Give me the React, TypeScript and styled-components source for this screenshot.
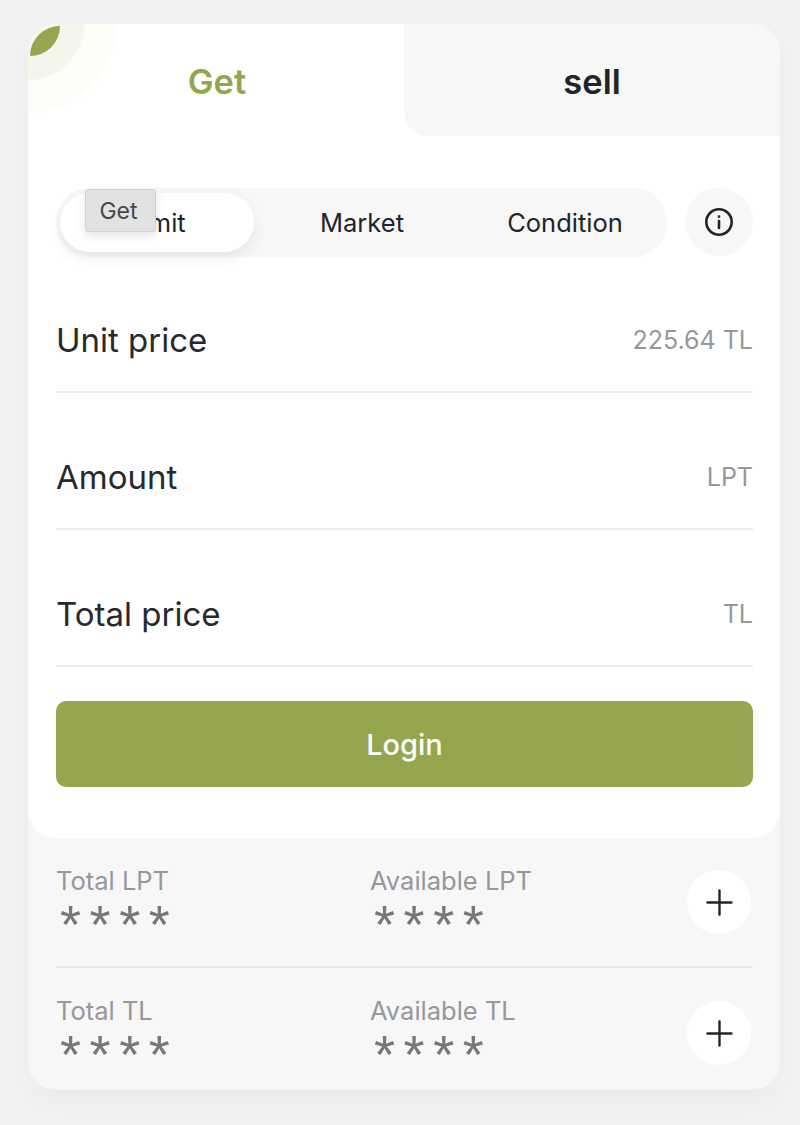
import styled, { createGlobalStyle } from "styled-components";
import { Plus } from "lucide-react";

const GlobalStyle = createGlobalStyle`
    html, body {
        margin: 0;
        padding: 0;
        background: #f2f2f3;
        font-family: "Inter", "Liberation Sans", sans-serif;
    }
`;

const balances = [
    { total: "Total LPT", available: "Available LPT" },
    { total: "Total TL", available: "Available TL" },
];

const fields = [
    { label: "Unit price", unit: "225.64 TL" },
    { label: "Amount", unit: "LPT" },
    { label: "Total price", unit: "TL" },
];

export default function App() {
    return (
        <Page>
            <GlobalStyle />
            <Card>
                <TradePanel>
                    <Glow />
                    <Leaf />
                    <Tabs>
                        <Tab $active>Get</Tab>
                        <Tab>sell</Tab>
                    </Tabs>
                    <Body>
                        <TypeRow>
                            <TypeSwitch>
                                <TypeOption $active>Limit</TypeOption>
                                <TypeOption>Market</TypeOption>
                                <TypeOption>Condition</TypeOption>
                                <Tooltip>Get</Tooltip>
                            </TypeSwitch>
                            <InfoButton>
                                <svg width="30" height="30" viewBox="0 0 30 30" fill="none" stroke="#222428" strokeWidth="2.6">
                                    <circle cx="15" cy="15" r="12.7" />
                                    <line x1="15" y1="14" x2="15" y2="21" strokeLinecap="round" />
                                    <circle cx="15" cy="9.6" r="0.8" fill="#222428" strokeWidth="1.2" />
                                </svg>
                            </InfoButton>
                        </TypeRow>
                        {fields.map((field) => (
                            <Field key={field.label}>
                                <FieldLabel>{field.label}</FieldLabel>
                                <FieldUnit>{field.unit}</FieldUnit>
                            </Field>
                        ))}
                        <LoginButton>Login</LoginButton>
                    </Body>
                </TradePanel>
                <Balances>
                    {balances.map((row) => (
                        <BalanceRow key={row.total}>
                            <BalanceItem>
                                <BalanceLabel>{row.total}</BalanceLabel>
                                <Stars>****</Stars>
                            </BalanceItem>
                            <BalanceItem>
                                <BalanceLabel>{row.available}</BalanceLabel>
                                <Stars>****</Stars>
                            </BalanceItem>
                            <AddButton>
                                <Plus size={41} strokeWidth={2.4} color="#222428" absoluteStrokeWidth />
                            </AddButton>
                        </BalanceRow>
                    ))}
                </Balances>
            </Card>
        </Page>
    );
}

const Page = styled.div`
    width: 800px;
    height: 1125px;
    box-sizing: border-box;
    padding: 24px 20px 0 28px;
    overflow: hidden;
`;

const Card = styled.div`
    width: 752px;
    height: 1066px;
    display: flex;
    flex-direction: column;
    border-radius: 28px;
    background: #f7f7f8;
    box-shadow: 0 12px 30px rgba(0, 0, 0, 0.035);
`;

const TradePanel = styled.div`
    position: relative;
    flex-shrink: 0;
    height: 814px;
    background: #ffffff;
    border-radius: 28px;
    overflow: hidden;
`;

const Glow = styled.div`
    position: absolute;
    top: -90px;
    left: -90px;
    width: 180px;
    height: 180px;
    border-radius: 50%;
    background: radial-gradient(circle, #f4f6ec 0 55px, #fcfdf7 57px 86px, transparent 90px);
`;

const Leaf = styled.div`
    position: absolute;
    top: 2px;
    left: 2px;
    width: 30px;
    height: 30px;
    background: #95a64e;
    border-radius: 100% 0 100% 0;
`;

const Tabs = styled.div`
    position: relative;
    display: flex;
    height: 112px;
`;

const Tab = styled.div<{ $active?: boolean }>`
    flex: 0 0 50%;
    box-sizing: border-box;
    display: flex;
    align-items: center;
    justify-content: center;
    padding-top: 2px;
    padding-left: ${(p) => (p.$active ? "2px" : "0")};
    font-size: 34.5px;
    font-weight: 600;
    color: ${(p) => (p.$active ? "#93a64f" : "#222428")};
    background: ${(p) => (p.$active ? "transparent" : "#f7f7f8")};
    border-bottom-left-radius: ${(p) => (p.$active ? "0" : "24px")};
`;

const Body = styled.div`
    display: flex;
    flex-direction: column;
    padding: 52px 27px 0 28px;
`;

const TypeRow = styled.div`
    display: flex;
    justify-content: space-between;
    height: 68px;
`;

const TypeSwitch = styled.div`
    position: relative;
    width: 611px;
    height: 69px;
    box-sizing: border-box;
    display: grid;
    grid-template-columns: 194px 216px 190px;
    align-items: center;
    padding: 0 4px;
    background: #f7f7f8;
    border-radius: 34px;
`;

const TypeOption = styled.div<{ $active?: boolean }>`
    height: 59px;
    display: flex;
    align-items: center;
    justify-content: center;
    font-size: 25.5px;
    font-weight: 400;
    color: #222428;
    background: ${(p) => (p.$active ? "#ffffff" : "transparent")};
    border-radius: 30px;
    box-shadow: ${(p) => (p.$active ? "0 6px 14px rgba(0, 0, 0, 0.07)" : "none")};
`;

const Tooltip = styled.div`
    position: absolute;
    top: 1px;
    left: 29px;
    width: 71px;
    height: 43px;
    box-sizing: border-box;
    display: flex;
    align-items: center;
    justify-content: center;
    padding-right: 4px;
    font-size: 23px;
    color: #46484c;
    background: #e2e2e2;
    border: 1px solid #d2d2d2;
    border-radius: 3px;
    box-shadow: 0 4px 10px rgba(0, 0, 0, 0.1);
`;

const InfoButton = styled.div`
    width: 68px;
    height: 68px;
    display: flex;
    align-items: center;
    justify-content: center;
    background: #f7f7f8;
    border-radius: 50%;
`;

const Field = styled.div`
    height: 137px;
    box-sizing: border-box;
    padding-top: 33px;
    display: flex;
    align-items: center;
    justify-content: space-between;
    border-bottom: 2px solid #eeeef0;
`;

const FieldLabel = styled.span`
    font-size: 33px;
    color: #27292d;
`;

const FieldUnit = styled.span`
    font-size: 25px;
    color: #96979b;
`;

const LoginButton = styled.div`
    margin-top: 34px;
    height: 86px;
    display: flex;
    align-items: center;
    justify-content: center;
    font-size: 29px;
    font-weight: 500;
    color: #ffffff;
    background: #95a64e;
    border-radius: 10px;
`;

const Balances = styled.div`
    height: 252px;
    display: flex;
    flex-direction: column;
    padding: 0 27px 0 28px;
`;

const BalanceRow = styled.div`
    flex-shrink: 0;
    height: 130px;
    box-sizing: border-box;
    display: grid;
    grid-template-columns: 314px 1fr 66px;
    align-items: center;
    &:first-child {
        border-bottom: 2px solid #ebebed;
    }
`;

const BalanceItem = styled.div`
    align-self: start;
    display: flex;
    flex-direction: column;
    padding-top: 27px;
`;

const BalanceLabel = styled.span`
    font-size: 25.5px;
    line-height: 32px;
    color: #96979b;
`;

const Stars = styled.span`
    padding-left: 4px;
    font-family: "Liberation Sans", sans-serif;
    font-size: 54px;
    line-height: 54px;
    letter-spacing: 8.6px;
    color: #76777b;
`;

const AddButton = styled.div`
    width: 64px;
    height: 64px;
    display: flex;
    align-items: center;
    justify-content: center;
    background: #ffffff;
    border-radius: 50%;
`;
